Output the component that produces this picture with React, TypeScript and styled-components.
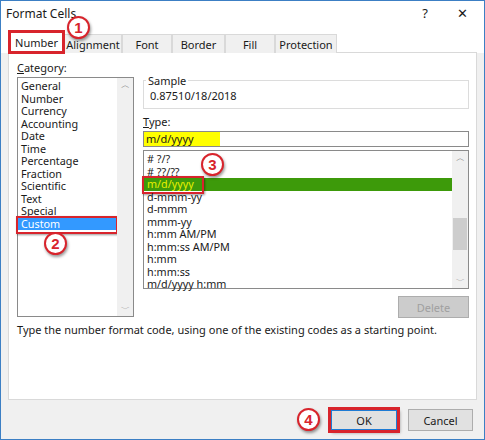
import React from "react";
import styled, { createGlobalStyle } from "styled-components";

const Global = createGlobalStyle`
  html, body { margin: 0; padding: 0; background: #fff; }
  body { font-family: "Noto Sans", "Open Sans", sans-serif; font-size: 11px; color: #1a1a1a; }
`;

const Window = styled.div`
  width: 485px;
  height: 440px;
  box-sizing: border-box;
  border: 1px solid #3c7fc4;
  background: #f0f0f0;
  display: flex;
  flex-direction: column;
  position: relative;
  overflow: hidden;
`;

const TitleBar = styled.div`
  height: 24px;
  background: #fff;
  display: flex;
  align-items: center;
  padding-left: 5px;
  font-size: 12px;
`;

const TitleText = styled.div`
  flex: 1;
`;

const TitleBtn = styled.div<{ w: number }>`
  width: ${(p) => p.w}px;
  text-align: center;
  font-size: 13px;
`;

const TabRow = styled.div`
  display: flex;
  align-items: flex-end;
  height: 28px;
  padding-left: 8px;
  background: #fff;
`;

const Tab = styled.div<{ active?: boolean; w: number }>`
  width: ${(p) => p.w}px;
  height: ${(p) => (p.active ? 22 : 19)}px;
  box-sizing: border-box;
  display: flex;
  align-items: center;
  justify-content: center;
  background: ${(p) => (p.active ? "#fff" : "#f0f0f0")};
  border: 1px solid #d9d9d9;
  border-bottom: none;
  outline: ${(p) => (p.active ? "3px solid #d8242c" : "none")};
  outline-offset: -2px;
  position: relative;
  z-index: ${(p) => (p.active ? 2 : 1)};
`;

const Panel = styled.div`
  margin: -1px 7px 0 7px;
  height: 348px;
  background: #fff;
  border: 1px solid #d9d9d9;
  box-sizing: border-box;
  display: flex;
  flex-direction: column;
  padding: 8px 7px 0 8px;
`;

const Columns = styled.div`
  display: flex;
  gap: 9px;
`;

const CatCol = styled.div`
  width: 117px;
  display: flex;
  flex-direction: column;
`;

const Label = styled.div<{ mt?: number }>`
  height: 14px;
  line-height: 14px;
  margin-top: ${(p) => p.mt ?? 0}px;
  margin-bottom: 2px;
`;

const ListBox = styled.div<{ h: number }>`
  height: ${(p) => p.h}px;
  border: 1px solid #8a8a8a;
  box-sizing: border-box;
  display: flex;
  position: relative;
`;

const Items = styled.div`
  flex: 1;
  padding-top: 2px;
  display: flex;
  flex-direction: column;
`;

const Item = styled.div<{ sel?: "blue" | "green" }>`
  height: 12.5px;
  line-height: 12.5px;
  font-size: 10.8px;
  padding-left: 3px;
  white-space: nowrap;
  color: ${(p) => (p.sel === "blue" ? "#fff" : p.sel === "green" ? "#e8f000" : "#1a1a1a")};
  background: ${(p) => (p.sel === "blue" ? "#3399ff" : p.sel === "green" ? "#3d9a0a" : "transparent")};
  position: relative;
`;

const RedBox = styled.div<{ w: number }>`
  position: absolute;
  left: -2px;
  top: -2px;
  width: ${(p) => p.w}px;
  height: 14px;
  border: 2px solid #d8242c;
  box-shadow: 1px 1px 2px rgba(0,0,0,0.4);
`;

const ScrollBar = styled.div`
  width: 16px;
  display: flex;
  flex-direction: column;
  align-items: center;
  justify-content: space-between;
  color: #888;
  font-size: 9px;
  position: relative;
  background: #f0f0f0;
`;

const Thumb = styled.div<{ top: number }>`
  position: absolute;
  left: 1px;
  width: 14px;
  height: 32px;
  top: ${(p) => p.top}px;
  background: #cdcdcd;
`;

const RightCol = styled.div`
  flex: 1;
  display: flex;
  flex-direction: column;
`;

const SampleGroup = styled.fieldset`
  margin: 0;
  margin-top: 12px;
  height: 36px;
  box-sizing: border-box;
  border: 1px solid #dcdcdc;
  padding: 0 6px;
  legend { padding: 0 2px; margin-left: -4px; }
`;

const TypeInput = styled.div`
  height: 16px;
  border: 1px solid #8a8a8a;
  box-sizing: border-box;
  margin-bottom: 3px;
  display: flex;
`;

const Yellow = styled.span`
  width: 74px;
  background: #ffff00;
  line-height: 14px;
  padding-left: 2px;
`;

const Btn = styled.div<{ disabled?: boolean; red?: boolean; w: number }>`
  width: ${(p) => p.w}px;
  height: 22px;
  box-sizing: border-box;
  display: flex;
  align-items: center;
  justify-content: center;
  background: ${(p) => (p.disabled ? "#cccccc" : "#e1e1e1")};
  color: ${(p) => (p.disabled ? "#a0a0a0" : "#1a1a1a")};
  border: 1px solid ${(p) => (p.red ? "#d8242c" : "#adadad")};
  outline: ${(p) => (p.red ? "2px solid #d8242c" : "none")};
  box-shadow: ${(p) => (p.red ? "inset 0 0 0 1px #1e7bd4, 2px 2px 3px rgba(0,0,0,0.35)" : "none")};
`;

const DeleteRow = styled.div`
  display: flex;
  justify-content: flex-end;
  margin-top: 7px;
`;

const Hint = styled.div`
  margin-top: 4px;
`;

const Footer = styled.div`
  display: flex;
  justify-content: flex-end;
  gap: 10px;
  padding: 9px 11px 0 0;
`;

const Badge = styled.div<{ x: number; y: number }>`
  position: absolute;
  left: ${(p) => p.x - 12}px;
  top: ${(p) => p.y - 12}px;
  width: 19px;
  height: 19px;
  border: 2.5px solid #d8242c;
  border-radius: 50%;
  background: #fff;
  color: #d8242c;
  font: bold 15px "Liberation Sans", sans-serif;
  display: flex;
  align-items: center;
  justify-content: center;
  box-shadow: 1px 2px 3px rgba(0,0,0,0.4);
  z-index: 5;
`;

const categories = ["General", "Number", "Currency", "Accounting", "Date", "Time", "Percentage", "Fraction", "Scientific", "Text", "Special", "Custom"];
const types = ["# ?/?", "# ??/??", "m/d/yyyy", "d-mmm-yy", "d-mmm", "mmm-yy", "h:mm AM/PM", "h:mm:ss AM/PM", "h:mm", "h:mm:ss", "m/d/yyyy h:mm"];

export default function App() {
  return (
    <>
      <Global />
      <Window>
        <TitleBar>
          <TitleText>Format Cells</TitleText>
          <TitleBtn w={30}>?</TitleBtn>
          <TitleBtn w={44}>✕</TitleBtn>
        </TitleBar>
        <TabRow>
          <Tab active w={55}>Number</Tab>
          <Tab w={58}>Alignment</Tab>
          <Tab w={50}>Font</Tab>
          <Tab w={53}>Border</Tab>
          <Tab w={50}>Fill</Tab>
          <Tab w={62}>Protection</Tab>
        </TabRow>
        <Panel>
          <Columns>
            <CatCol>
              <Label><u>C</u>ategory:</Label>
              <ListBox h={240}>
                <Items>
                  {categories.map((c) => (
                    <Item key={c} sel={c === "Custom" ? "blue" : undefined}>
                      {c}
                      {c === "Custom" && <RedBox w={98} />}
                    </Item>
                  ))}
                </Items>
                <ScrollBar>
                  <span>︿</span>
                  <span>﹀</span>
                </ScrollBar>
              </ListBox>
            </CatCol>
            <RightCol>
              <SampleGroup>
                <legend>Sample</legend>
                <div>0.87510/18/2018</div>
              </SampleGroup>
              <Label mt={6}><u>T</u>ype:</Label>
              <TypeInput><Yellow>m/d/yyyy</Yellow></TypeInput>
              <ListBox h={139}>
                <Items>
                  {types.map((t) => (
                    <Item key={t} sel={t === "m/d/yyyy" ? "green" : undefined}>
                      {t}
                      {t === "m/d/yyyy" && <RedBox w={58} />}
                    </Item>
                  ))}
                </Items>
                <ScrollBar>
                  <span>︿</span>
                  <Thumb top={67} />
                  <span>﹀</span>
                </ScrollBar>
              </ListBox>
              <DeleteRow>
                <Btn disabled w={71}>Delete</Btn>
              </DeleteRow>
            </RightCol>
          </Columns>
          <Hint>Type the number format code, using one of the existing codes as a starting point.</Hint>
        </Panel>
        <Footer>
          <Btn red w={68}>OK</Btn>
          <Btn w={65}>Cancel</Btn>
        </Footer>
        <Badge x={78} y={27}>1</Badge>
        <Badge x={55} y={243}>2</Badge>
        <Badge x={212} y={164}>3</Badge>
        <Badge x={308} y={419}>4</Badge>
      </Window>
    </>
  );
}
